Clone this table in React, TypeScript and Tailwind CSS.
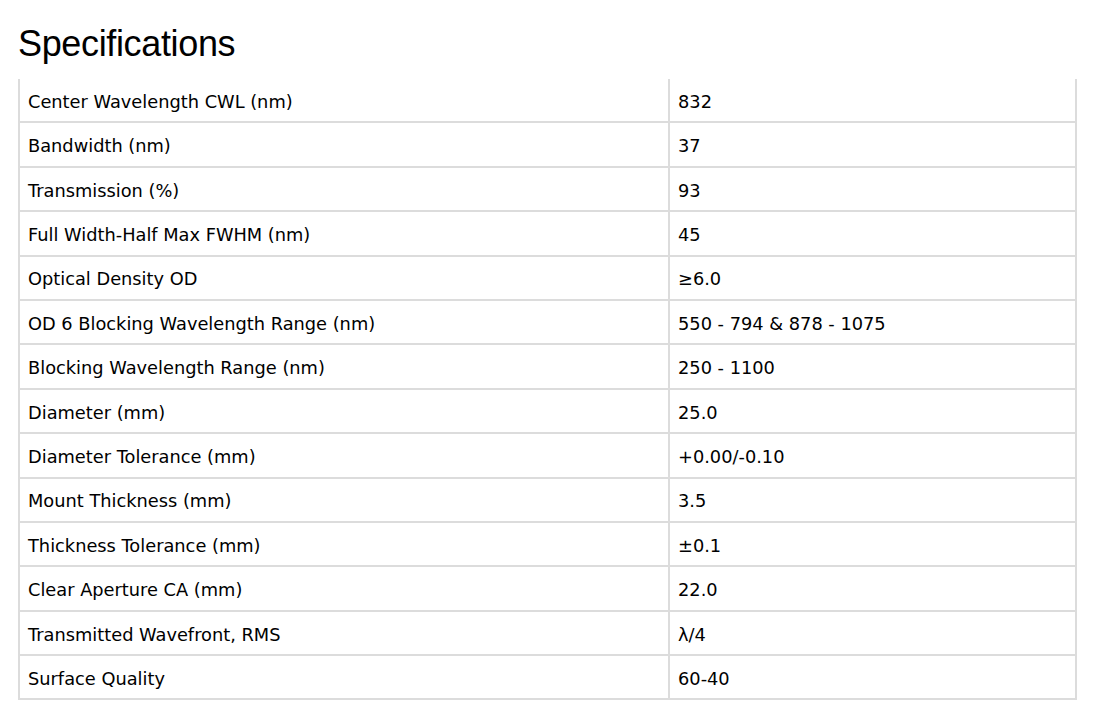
import React from "react";

const rows: [string, string][] = [
  ["Center Wavelength CWL (nm)", "832"],
  ["Bandwidth (nm)", "37"],
  ["Transmission (%)", "93"],
  ["Full Width-Half Max FWHM (nm)", "45"],
  ["Optical Density OD", "≥6.0"],
  ["OD 6 Blocking Wavelength Range (nm)", "550 - 794 & 878 - 1075"],
  ["Blocking Wavelength Range (nm)", "250 - 1100"],
  ["Diameter (mm)", "25.0"],
  ["Diameter Tolerance (mm)", "+0.00/-0.10"],
  ["Mount Thickness (mm)", "3.5"],
  ["Thickness Tolerance (mm)", "±0.1"],
  ["Clear Aperture CA (mm)", "22.0"],
  ["Transmitted Wavefront, RMS", "λ/4"],
  ["Surface Quality", "60-40"],
];

export default function App() {
  return (
    <div className="min-h-[722px] w-[1102px] bg-white text-black">
      <h1 className="pl-[18px] pt-[22px] text-[36px] leading-[44px] font-['Liberation_Sans',Arial,sans-serif] tracking-[-0.35px]">
        Specifications
      </h1>
      <div className="ml-[18px] mt-[13px] w-[1059px] border-l-2 border-r-2 border-[#dcdcdc] font-['DejaVu_Sans',Verdana,sans-serif] text-[17.8px]">
        {rows.map(([k, v]) => (
          <div key={k} className="flex h-[44.4px] border-b-2 border-[#dcdcdc]">
            <div className="flex w-[650px] items-center border-r-2 border-[#dcdcdc] pl-[8px] pt-[4px]">{k}</div>
            <div className="flex flex-1 items-center pl-[8px] pt-[4px]">{v}</div>
          </div>
        ))}
      </div>
    </div>
  );
}
